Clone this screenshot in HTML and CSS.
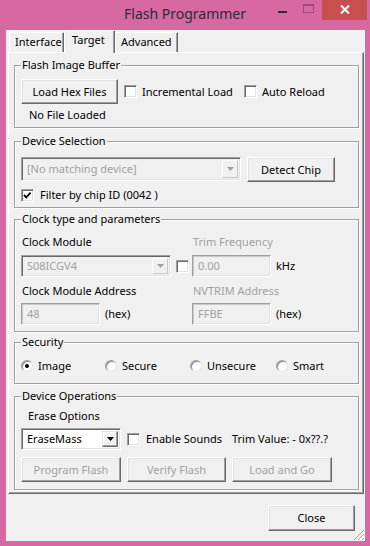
FILE: index.html
```html
<!DOCTYPE html>
<html lang="en">
<head>
    <meta charset="UTF-8">
    <meta name="viewport" content="width=device-width, initial-scale=1.0">
    <title>Flash Programmer</title>
    <link rel="stylesheet" href="styles.css">
</head>
<body>
    <div class="window">
        <div class="titlebar">
            <div class="title">Flash Programmer</div>
            <div class="controls">
                <span class="ctl min"><svg width="9" height="2" viewBox="0 0 9 2"><rect width="9" height="2" fill="#2b2b33"/></svg></span>
                <span class="ctl max"><svg width="11" height="9" viewBox="0 0 11 9"><rect x="0.5" y="0.5" width="10" height="8" fill="none" stroke="#9a4a78"/><rect x="1" y="1" width="9" height="1" fill="#9a4a78"/></svg></span>
                <span class="ctl close"><svg width="10" height="9" viewBox="0 0 10 9"><path d="M1 0.5 L9 8.5 M9 0.5 L1 8.5" stroke="#fff" stroke-width="2"/></svg></span>
            </div>
        </div>

        <div class="client">
            <div class="tabs">
                <div class="tab w-interface">Interface</div>
                <div class="tab active w-target">Target</div>
                <div class="tab w-advanced">Advanced</div>
            </div>

            <div class="panel">
                <!-- Flash image buffer -->
                <fieldset class="group g-buffer">
                    <legend>Flash Image Buffer</legend>
                    <div class="row">
                        <button class="btn load">Load Hex Files</button>
                        <label class="chk w-incr"><span class="box"></span>Incremental Load</label>
                        <label class="chk"><span class="box"></span>Auto Reload</label>
                    </div>
                    <div class="status">No File Loaded</div>
                </fieldset>

                <!-- Device selection -->
                <fieldset class="group g-device">
                    <legend>Device Selection</legend>
                    <div class="row start">
                        <div class="combo disabled w-device">
                            <span class="value">[No matching device]</span>
                            <span class="drop"><svg width="7" height="4" viewBox="0 0 7 4"><polygon points="0,0 7,0 3.5,4" fill="#a0a0a0"/></svg></span>
                        </div>
                        <button class="btn detect">Detect Chip</button>
                    </div>
                    <label class="chk filter">
                        <span class="box"><svg width="11" height="11" viewBox="0 0 11 11"><path d="M2 5 L4.2 7.3 L8.6 2.6" fill="none" stroke="#000" stroke-width="1.9"/></svg></span>
                        Filter by chip ID (0042 )
                    </label>
                </fieldset>

                <!-- Clock -->
                <fieldset class="group g-clock">
                    <legend>Clock type and parameters</legend>
                    <div class="clock-grid">
                        <div class="cap">Clock Module</div>
                        <div class="cap off">Trim Frequency</div>

                        <div class="row">
                            <div class="combo disabled w-module">
                                <span class="value">S08ICGV4</span>
                                <span class="drop"><svg width="7" height="4" viewBox="0 0 7 4"><polygon points="0,0 7,0 3.5,4" fill="#a0a0a0"/></svg></span>
                            </div>
                            <span class="box trim-box"></span>
                        </div>
                        <div class="row">
                            <div class="field">0.00</div>
                            <span class="unit">kHz</span>
                        </div>

                        <div class="cap cap2">Clock Module Address</div>
                        <div class="cap cap2 off">NVTRIM Address</div>

                        <div class="row">
                            <div class="field">48</div>
                            <span class="unit">(hex)</span>
                        </div>
                        <div class="row">
                            <div class="field">FFBE</div>
                            <span class="unit">(hex)</span>
                        </div>
                    </div>
                </fieldset>

                <!-- Security -->
                <fieldset class="group g-security">
                    <legend>Security</legend>
                    <div class="radios">
                        <label class="opt"><span class="radio on"></span>Image</label>
                        <label class="opt"><span class="radio"></span>Secure</label>
                        <label class="opt"><span class="radio"></span>Unsecure</label>
                        <label class="opt"><span class="radio"></span>Smart</label>
                    </div>
                </fieldset>

                <!-- Device operations -->
                <fieldset class="group g-ops">
                    <legend>Device Operations</legend>
                    <div class="erase-title">Erase Options</div>
                    <div class="ops-grid">
                        <div class="combo">
                            <span class="value">EraseMass</span>
                            <span class="drop"><svg width="7" height="4" viewBox="0 0 7 4"><polygon points="0,0 7,0 3.5,4" fill="#000"/></svg></span>
                        </div>
                        <label class="chk sounds"><span class="box"></span>Enable Sounds</label>
                        <div class="trim">Trim Value: - 0x??.?</div>

                        <button class="btn off">Program Flash</button>
                        <button class="btn off">Verify Flash</button>
                        <button class="btn off">Load and Go</button>
                    </div>
                </fieldset>
            </div>

            <div class="footer">
                <button class="btn close-btn">Close</button>
            </div>
            <svg class="grip" width="12" height="12" viewBox="0 0 12 12">
                <path d="M11 1 L1 11 M11 5 L5 11 M11 9 L9 11" stroke="#a0a0a0" stroke-width="1"/>
                <path d="M12 2 L2 12 M12 6 L6 12 M12 10 L10 12" stroke="#fff" stroke-width="1"/>
            </svg>
        </div>
    </div>
</body>
</html>
```

FILE: styles.css
```css
* {
    box-sizing: border-box;
}
body {
    margin: 0;
    background: #d669a0;
    font-family: "Noto Sans", "Liberation Sans", sans-serif;
    font-size: 11px;
    line-height: 14px;
    color: #000;
}
.window {
    width: 370px;
    height: 546px;
    display: flex;
    flex-direction: column;
}

/* title bar */
.titlebar {
    height: 30px;
    display: flex;
    align-items: flex-start;
}
.title {
    flex: 1;
    text-align: center;
    padding-left: 101px;
    padding-top: 4px;
    font-size: 14px;
    line-height: 20px;
    color: #2b2b38;
}
.controls {
    display: flex;
    padding-right: 3px;
}
.ctl {
    height: 20px;
    display: flex;
    align-items: center;
    justify-content: center;
}
.ctl.min {
    width: 26px;
    padding-top: 3px;
}
.ctl.max {
    width: 27px;
    padding-bottom: 3px;
}
.ctl.close {
    width: 45px;
    background: #c7504f;
    padding-bottom: 2px;
}

/* client area */
.client {
    flex: 1;
    margin: 0 5px 5px 6px;
    background: #f0f0f0;
    display: flex;
    flex-direction: column;
    position: relative;
}

.tabs {
    display: flex;
    align-items: flex-end;
    height: 22px;
    padding-left: 3px;
    position: relative;
    z-index: 1;
}
.tab {
    height: 20px;
    line-height: 18px;
    padding-left: 5px;
    border: 1px solid;
    border-bottom: none;
    border-color: #fff #696969 transparent #fff;
    box-shadow: inset -1px 0 #a0a0a0;
    background: #f0f0f0;
}
.tab.active {
    height: 23px;
    margin-bottom: -1px;
    padding-left: 7px;
    line-height: 18px;
}
.w-interface {
    width: 55px;
}
.w-target {
    width: 51px;
}
.w-advanced {
    width: 63px;
}

.panel {
    margin: 0 1px 0 2px;
    border: 1px solid;
    border-color: #fff #696969 #696969 #fff;
    box-shadow: inset -1px -1px #a0a0a0;
    padding: 5px 4px 3px 5px;
}

/* group boxes */
.group {
    margin: 0;
    padding: 0 6px 5px 6px;
    border: 1px solid #a0a0a0;
    box-shadow: inset 1px 1px #fff, 1px 1px #fff;
}
.group legend {
    padding: 0 1px;
    background: #f0f0f0;
    line-height: 14px;
}
.g-buffer {
    padding-top: 7px;
}
.g-device {
    margin-top: 6px;
    padding-top: 9px;
}
.g-clock {
    margin-top: 4px;
    padding-top: 9px;
    padding-bottom: 6px;
}
.g-security {
    margin-top: 3px;
    padding-top: 10px;
    padding-bottom: 10px;
}
.g-ops {
    margin-top: 5px;
    padding-top: 6px;
    padding-bottom: 7px;
}

.row {
    display: flex;
    align-items: center;
}
.row.start {
    align-items: flex-start;
}

/* buttons */
.btn {
    font: inherit;
    color: #000;
    background: #f0f0f0;
    border: 1px solid;
    border-color: #fff #696969 #696969 #fff;
    box-shadow: inset -1px -1px #a0a0a0, inset 1px 1px #e3e3e3;
    padding: 0;
    height: 25px;
}
.btn.off {
    color: #a0a0a0;
}
.load {
    width: 97px;
    margin-right: 6px;
}
.detect {
    width: 88px;
    margin-left: 6px;
}

/* check boxes and radios */
.chk {
    display: flex;
    align-items: center;
    gap: 5px;
}
.w-incr {
    width: 120px;
}
.box {
    width: 13px;
    height: 13px;
    flex: none;
    background: #fff;
    border: 1px solid;
    border-color: #a0a0a0 #fff #fff #a0a0a0;
    box-shadow: inset 1px 1px #696969, inset -1px -1px #e3e3e3;
    display: flex;
}
.filter {
    margin-top: 6px;
    gap: 6px;
}
.status {
    margin-top: 4px;
    padding-left: 8px;
}

.radios {
    display: grid;
    grid-template-columns: 84px 85px 86px auto;
}
.opt {
    display: flex;
    align-items: center;
    gap: 5px;
}
.radio {
    width: 12px;
    height: 12px;
    border-radius: 50%;
    background: #fff;
    border: 1px solid;
    border-color: #a0a0a0 #e3e3e3 #e3e3e3 #a0a0a0;
    box-shadow: inset 1px 1px #8a8a8a;
    display: flex;
    align-items: center;
    justify-content: center;
}
.radio.on::after {
    content: "";
    width: 4px;
    height: 4px;
    border-radius: 50%;
    background: #000;
}

/* combos and fields */
.combo {
    height: 22px;
    display: flex;
    align-items: stretch;
    background: #fff;
    border: 1px solid;
    border-color: #a0a0a0 #fff #fff #a0a0a0;
    box-shadow: inset 1px 1px #696969, inset -1px -1px #e3e3e3;
    padding: 2px;
}
.combo .value {
    flex: 1;
    padding-left: 3px;
    line-height: 16px;
}
.combo .drop {
    width: 16px;
    background: #f0f0f0;
    border: 1px solid;
    border-color: #e3e3e3 #696969 #696969 #e3e3e3;
    box-shadow: inset -1px -1px #a0a0a0, inset 1px 1px #fff;
    display: flex;
    align-items: center;
    justify-content: center;
}
.combo.disabled {
    background: #f0f0f0;
    color: #a0a0a0;
}
.combo.disabled .drop {
    border-color: #fff #c8c8c8 #c8c8c8 #fff;
    box-shadow: none;
}
.w-device {
    width: 220px;
    height: 24px;
}
.w-device .value {
    line-height: 18px;
}
.w-module {
    width: 150px;
}
.trim-box {
    margin-left: 5px;
}

.clock-grid {
    display: grid;
    grid-template-columns: 171px auto;
    row-gap: 0;
}
.cap {
    padding-left: 1px;
    margin-bottom: 6px;
}
.cap2 {
    margin-top: 7px;
    margin-bottom: 5px;
}
.cap.off {
    color: #a0a0a0;
}
.field {
    width: 79px;
    height: 22px;
    background: #f0f0f0;
    color: #a0a0a0;
    border: 1px solid;
    border-color: #a0a0a0 #fff #fff #a0a0a0;
    box-shadow: inset 1px 1px #c8c8c8, inset -1px -1px #e3e3e3;
    padding-left: 5px;
    line-height: 19px;
}
.unit {
    margin-left: 5px;
}

.erase-title {
    padding-left: 7px;
    margin-bottom: 5px;
}
.ops-grid {
    display: grid;
    grid-template-columns: 100px 99px 100px;
    column-gap: 6px;
    row-gap: 7px;
    align-items: center;
}
.sounds {
    gap: 6px;
}

/* footer */
.footer {
    display: flex;
    justify-content: flex-end;
    padding: 11px 10px 0 0;
}
.close-btn {
    width: 87px;
    height: 26px;
}
.grip {
    position: absolute;
    right: 0;
    bottom: 0;
}
```
